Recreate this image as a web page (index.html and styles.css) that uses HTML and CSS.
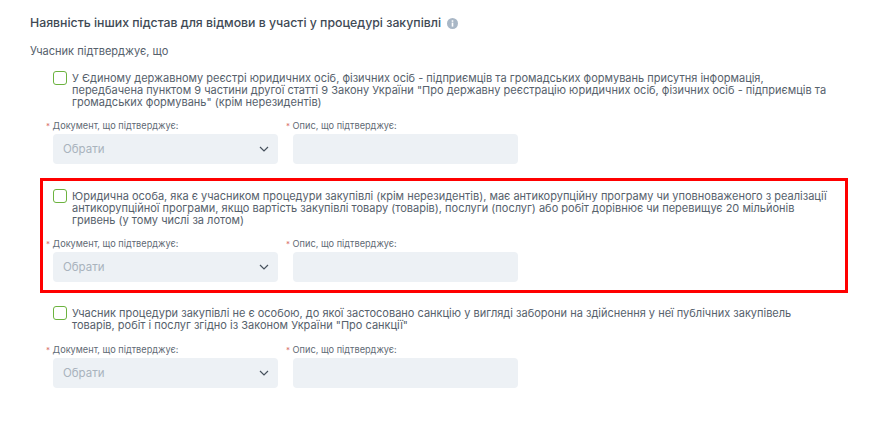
FILE: index.html
```html
<!DOCTYPE html>
<html lang="uk">
<head>
<meta charset="utf-8">
<title>Підстави для відмови</title>
<link rel="stylesheet" href="styles.css">
</head>
<body>
<main class="page">
  <h2 class="title">Наявність інших підстав для відмови в участі у процедурі закупівлі
    <svg class="info" width="11" height="11" viewBox="0 0 11 11"><circle cx="5.5" cy="5.5" r="5.5" fill="#a9b7c6"/><rect x="4.7" y="4.6" width="1.6" height="4" fill="#fff"/><rect x="4.7" y="2.3" width="1.6" height="1.5" fill="#fff"/></svg>
  </h2>
  <p class="subtitle">Учасник підтверджує, що</p>
  <div class="items">
    <section class="item">
      <div class="check-row"><span class="checkbox"></span><p class="check-text">У Єдиному державному реєстрі юридичних осіб, фізичних осіб - підприємців та громадських формувань присутня інформація, передбачена пунктом 9 частини другої статті 9 Закону України "Про державну реєстрацію юридичних осіб, фізичних осіб - підприємців та громадських формувань" (крім нерезидентів)</p></div>
      <div class="fields">
        <div class="field"><label class="label"><span class="star">*</span> Документ, що підтверджує:</label><div class="select"><span>Обрати</span><svg class="chev" width="10" height="6" viewBox="0 0 10 6"><path d="M1 1l4 4 4-4" fill="none" stroke="#47525e" stroke-width="1.2"/></svg></div></div>
        <div class="field"><label class="label"><span class="star">*</span> Опис, що підтверджує:</label><div class="input"></div></div>
      </div>
    </section>
    <section class="item item-marked">
      <div class="check-row"><span class="checkbox"></span><p class="check-text">Юридична особа, яка є учасником процедури закупівлі (крім нерезидентів), має антикорупційну програму чи уповноваженого з реалізації антикорупційної програми, якщо вартість закупівлі товару (товарів), послуги (послуг) або робіт дорівнює чи перевищує 20 мільйонів гривень (у тому числі за лотом)</p></div>
      <div class="fields">
        <div class="field"><label class="label"><span class="star">*</span> Документ, що підтверджує:</label><div class="select"><span>Обрати</span><svg class="chev" width="10" height="6" viewBox="0 0 10 6"><path d="M1 1l4 4 4-4" fill="none" stroke="#47525e" stroke-width="1.2"/></svg></div></div>
        <div class="field"><label class="label"><span class="star">*</span> Опис, що підтверджує:</label><div class="input"></div></div>
      </div>
    </section>
    <section class="item">
      <div class="check-row"><span class="checkbox"></span><p class="check-text">Учасник процедури закупівлі не є особою, до якої застосовано санкцію у вигляді заборони на здійснення у неї публічних закупівель товарів, робіт і послуг згідно із Законом України "Про санкції"</p></div>
      <div class="fields">
        <div class="field"><label class="label"><span class="star">*</span> Документ, що підтверджує:</label><div class="select"><span>Обрати</span><svg class="chev" width="10" height="6" viewBox="0 0 10 6"><path d="M1 1l4 4 4-4" fill="none" stroke="#47525e" stroke-width="1.2"/></svg></div></div>
        <div class="field"><label class="label"><span class="star">*</span> Опис, що підтверджує:</label><div class="input"></div></div>
      </div>
    </section>
  </div>
</main>
</body>
</html>
```
FILE: styles.css
```css
* { box-sizing: border-box; }
html, body { margin: 0; background: #fff; }
body { font-family: Inter, "Noto Sans", sans-serif; color: #56616c; }
.page { padding: 15px 0 0 30px; width: 875px; height: 426px; overflow: hidden; }
.title { margin: 0; font-size: 12.3px; line-height: 16px; font-weight: 500; color: #3f4a55; display: flex; align-items: center; gap: 6px; }
.subtitle { margin: 13px 0 0; font-size: 11.05px; line-height: 14px; }
.items { margin: 2px 0 0 10px; width: 808px; display: flex; flex-direction: column; gap: 2.1px; }
.item { border: 3px solid transparent; padding: 8px 0 8px 10px; }
.item-marked { border-color: #f00; }
.check-row { display: flex; gap: 5px; }
.checkbox { flex: none; width: 14px; height: 14px; border: 1px solid #6cb33f; border-radius: 3px; }
.check-text { margin: 1px 0 -1px; font-size: 11px; line-height: 12px; width: 756px; }
.fields { display: flex; gap: 15px; margin-top: 12.45px; }
.field { width: 225px; }
.label { display: block; font-size: 9.2px; line-height: 12px; margin: 0 0 2px -7px; padding-top: 1px; height: 13px; color: #5f6a75; }
.star { color: #d9706b; font-size: 8px; }
.select, .input { height: 30px; background: #edf1f5; border-radius: 4px; }
.select { display: flex; align-items: center; justify-content: space-between; padding: 0 9px 0 10px; font-size: 11.5px; color: #a9b3bd; }
```
